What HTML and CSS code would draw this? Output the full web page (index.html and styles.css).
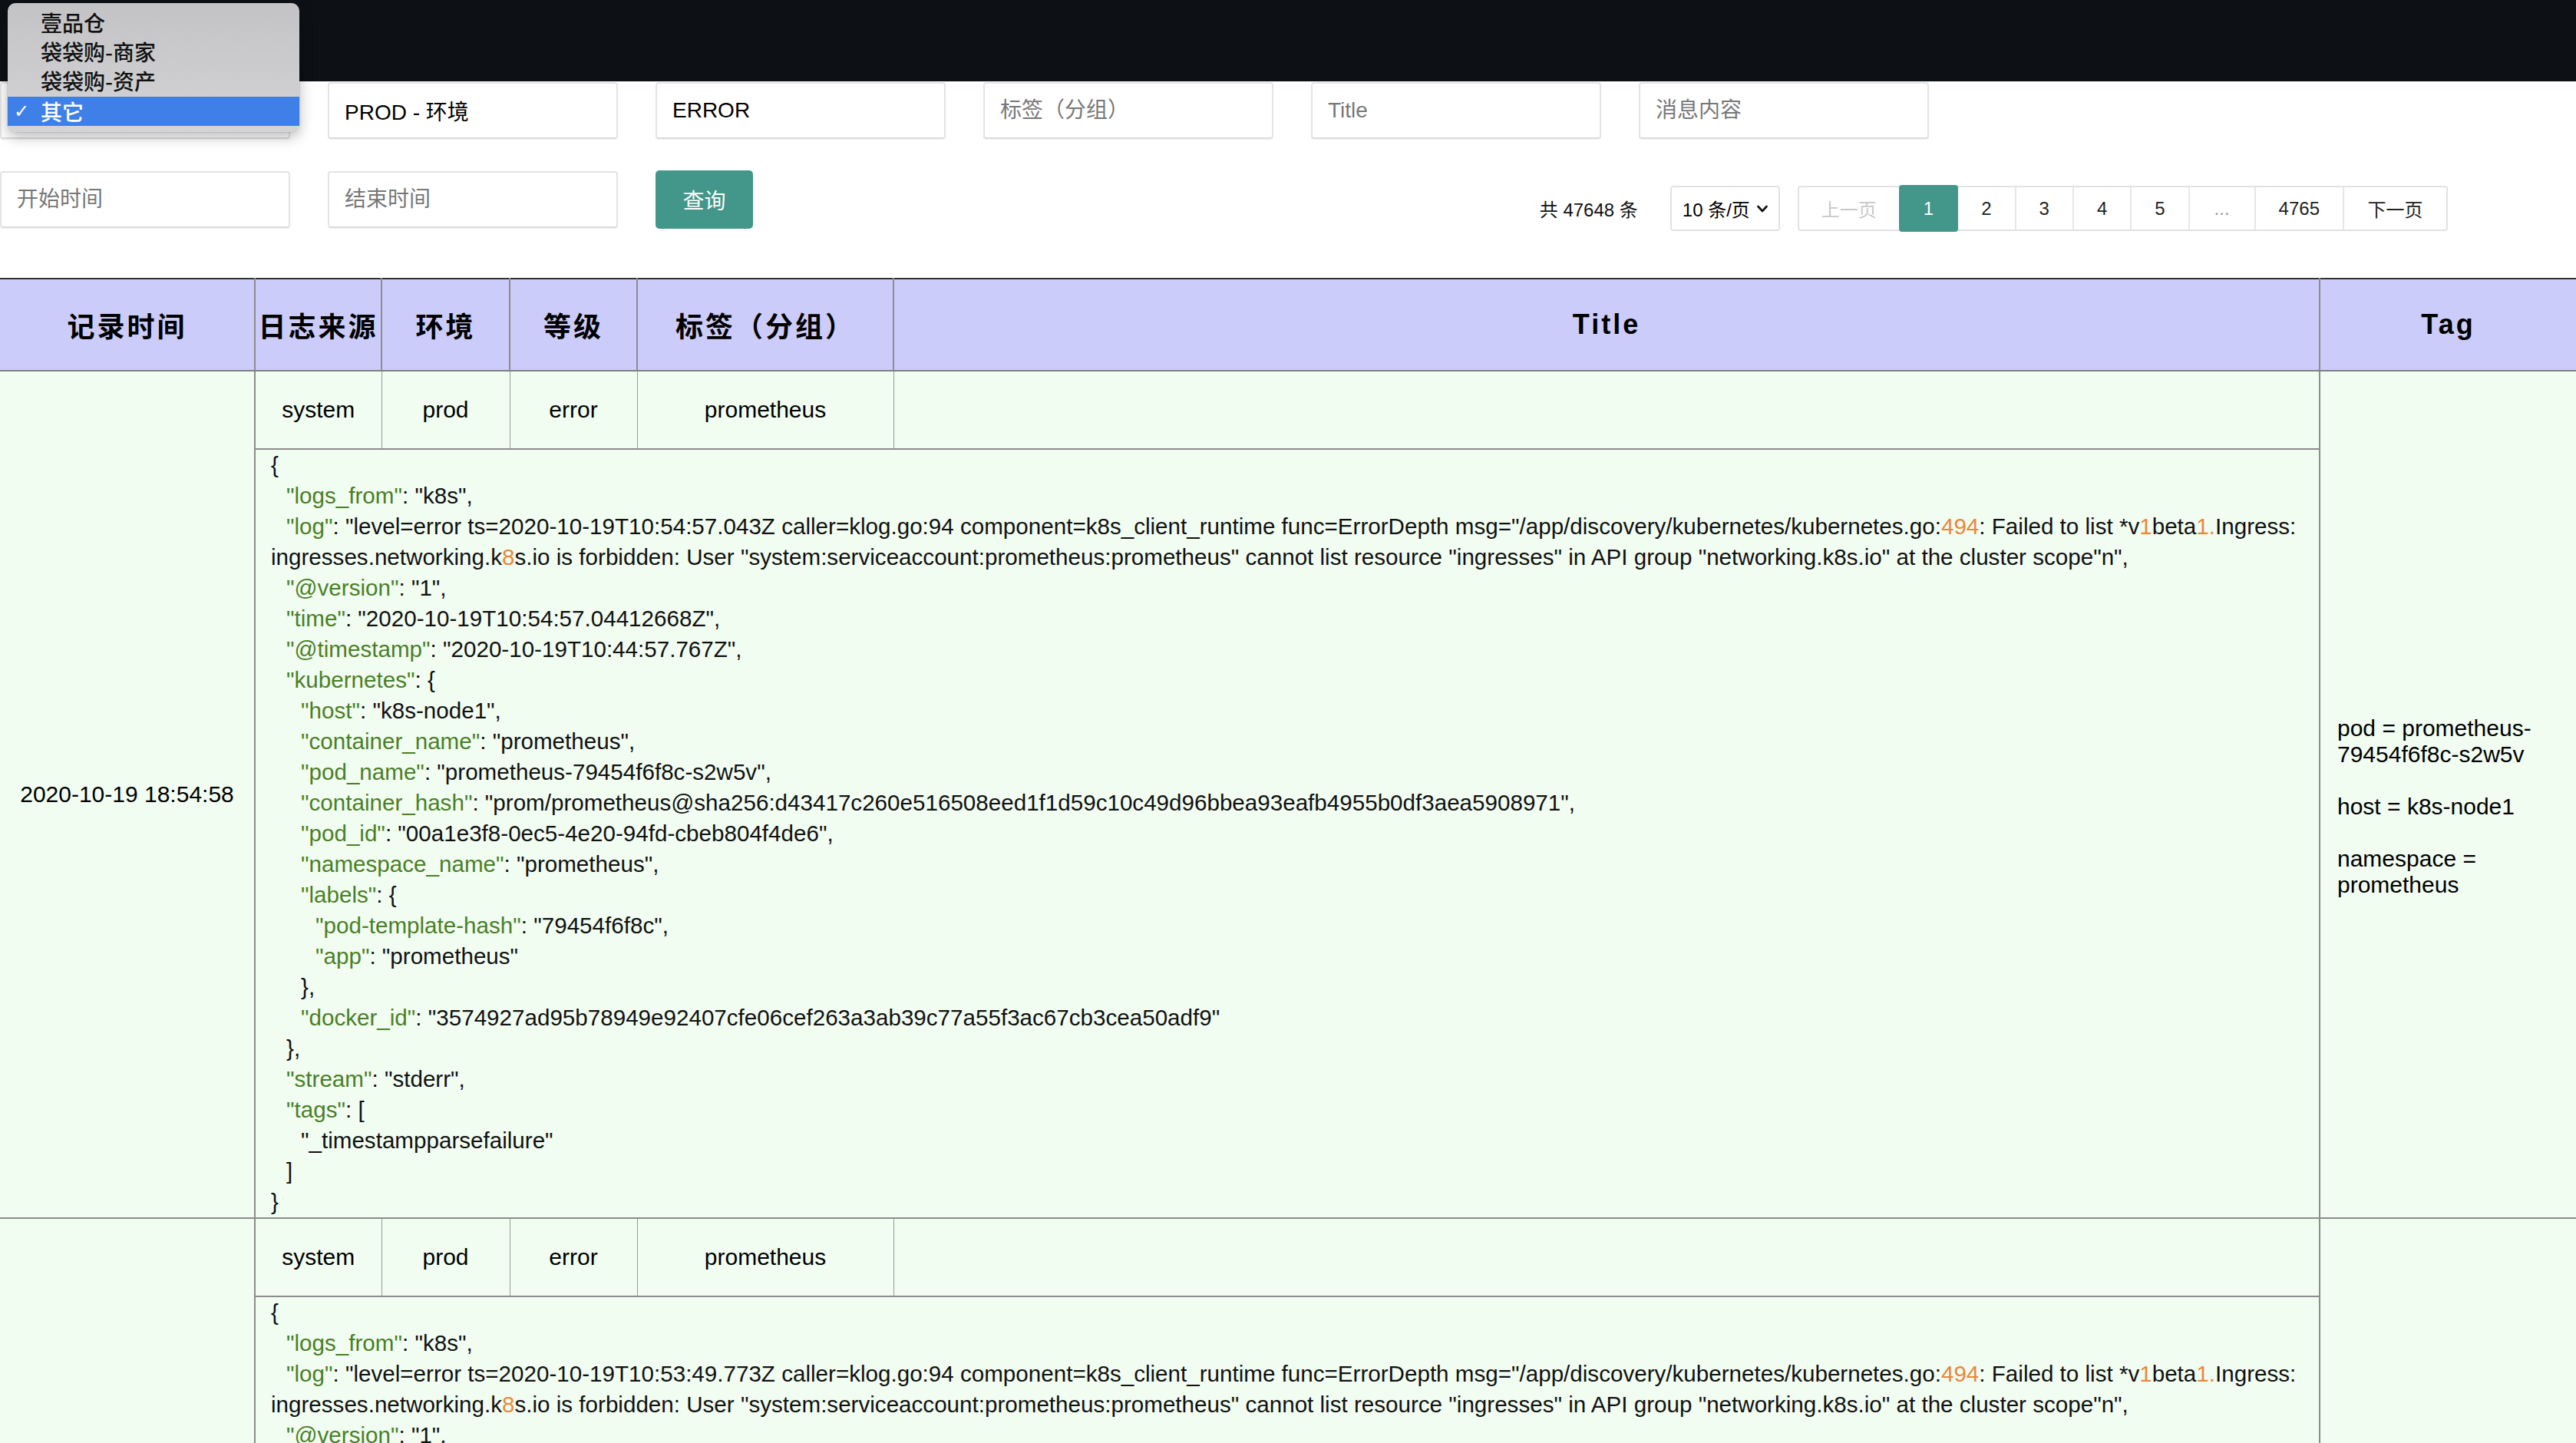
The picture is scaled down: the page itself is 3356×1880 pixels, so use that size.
FILE: index.html
```html
<!DOCTYPE html>
<html lang="zh-CN">
<head>
<meta charset="utf-8">
<title>日志查询</title>
<link rel="stylesheet" href="styles.css">
</head>
<body>
<div class="topbar"></div>

<div class="filters">
  <div class="filter-row">
    <div class="field select-field"></div>
    <input class="field" type="text" value="PROD - 环境">
    <input class="field" type="text" value="ERROR">
    <input class="field" type="text" placeholder="标签（分组）">
    <input class="field" type="text" placeholder="Title">
    <input class="field" type="text" placeholder="消息内容">
  </div>
  <div class="filter-row second">
    <input class="field" type="text" placeholder="开始时间">
    <input class="field" type="text" placeholder="结束时间">
    <button class="btn-query" type="button">查询</button>
    <div class="pager-wrap">
      <span class="total">共 47648 条</span>
      <div class="size-select">10 条/页
        <svg class="chev" viewBox="0 0 14 10" width="14" height="10"><path d="M1.5 2 L7 8 L12.5 2" fill="none" stroke="#111" stroke-width="2.6" stroke-linecap="round" stroke-linejoin="round"/></svg>
      </div>
      <ul class="pager">
        <li class="disabled">上一页</li>
        <li class="active">1</li>
        <li>2</li>
        <li>3</li>
        <li>4</li>
        <li>5</li>
        <li class="more">...</li>
        <li>4765</li>
        <li>下一页</li>
      </ul>
    </div>
  </div>
</div>

<div class="menu">
  <div class="menu-item">壹品仓</div>
  <div class="menu-item">袋袋购-商家</div>
  <div class="menu-item">袋袋购-资产</div>
  <div class="menu-item selected"><span class="check">✓</span>其它</div>
</div>

<table class="logs">
  <colgroup>
    <col class="c-time">
    <col class="c-src">
    <col class="c-env">
    <col class="c-lvl">
    <col class="c-tag">
    <col class="c-title">
    <col class="c-tags">
  </colgroup>
  <thead>
    <tr>
      <th>记录时间</th>
      <th>日志来源</th>
      <th>环境</th>
      <th>等级</th>
      <th>标签（分组）</th>
      <th>Title</th>
      <th>Tag</th>
    </tr>
  </thead>
  <tbody>
    <tr class="meta">
      <td class="time" rowspan="2">2020-10-19 18:54:58</td>
      <td class="sub">system</td>
      <td class="sub">prod</td>
      <td class="sub">error</td>
      <td class="sub">prometheus</td>
      <td class="sub"></td>
      <td class="tagcell" rowspan="2">pod = prometheus-<wbr>79454f6f8c-s2w5v<br><br>host = k8s-node1<br><br>namespace = prometheus</td>
    </tr>
    <tr>
      <td class="json" colspan="5">
        <div>{</div>
        <div class="i1"><span class="k">"logs_from"</span>: "k8s",</div>
        <div class="i1"><span class="k">"log"</span>: "level=error ts=2020-10-19T10:54:57.043Z caller=klog.go:94 component=k8s_client_runtime func=ErrorDepth msg="/app/discovery/kubernetes/kubernetes.go:<span class="n">494</span>: Failed to list *v<span class="n">1</span>beta<span class="n">1.</span>Ingress:</div>
        <div>ingresses.networking.k<span class="n">8</span>s.io is forbidden: User "system:serviceaccount:prometheus:prometheus" cannot list resource "ingresses" in API group "networking.k8s.io" at the cluster scope"n",</div>
        <div class="i1"><span class="k">"@version"</span>: "1",</div>
        <div class="i1"><span class="k">"time"</span>: "2020-10-19T10:54:57.04412668Z",</div>
        <div class="i1"><span class="k">"@timestamp"</span>: "2020-10-19T10:44:57.767Z",</div>
        <div class="i1"><span class="k">"kubernetes"</span>: {</div>
        <div class="i2"><span class="k">"host"</span>: "k8s-node1",</div>
        <div class="i2"><span class="k">"container_name"</span>: "prometheus",</div>
        <div class="i2"><span class="k">"pod_name"</span>: "prometheus-79454f6f8c-s2w5v",</div>
        <div class="i2"><span class="k">"container_hash"</span>: "prom/prometheus@sha256:d43417c260e516508eed1f1d59c10c49d96bbea93eafb4955b0df3aea5908971",</div>
        <div class="i2"><span class="k">"pod_id"</span>: "00a1e3f8-0ec5-4e20-94fd-cbeb804f4de6",</div>
        <div class="i2"><span class="k">"namespace_name"</span>: "prometheus",</div>
        <div class="i2"><span class="k">"labels"</span>: {</div>
        <div class="i3"><span class="k">"pod-template-hash"</span>: "79454f6f8c",</div>
        <div class="i3"><span class="k">"app"</span>: "prometheus"</div>
        <div class="i2">},</div>
        <div class="i2"><span class="k">"docker_id"</span>: "3574927ad95b78949e92407cfe06cef263a3ab39c77a55f3ac67cb3cea50adf9"</div>
        <div class="i1">},</div>
        <div class="i1"><span class="k">"stream"</span>: "stderr",</div>
        <div class="i1"><span class="k">"tags"</span>: [</div>
        <div class="i2">"_timestampparsefailure"</div>
        <div class="i1">]</div>
        <div>}</div>
      </td>
    </tr>
    <tr class="meta">
      <td class="time" rowspan="2">2020-10-19 18:53:50</td>
      <td class="sub">system</td>
      <td class="sub">prod</td>
      <td class="sub">error</td>
      <td class="sub">prometheus</td>
      <td class="sub"></td>
      <td class="tagcell" rowspan="2">pod = prometheus-<wbr>79454f6f8c-s2w5v<br><br>host = k8s-node1<br><br>namespace = prometheus</td>
    </tr>
    <tr>
      <td class="json" colspan="5">
        <div>{</div>
        <div class="i1"><span class="k">"logs_from"</span>: "k8s",</div>
        <div class="i1"><span class="k">"log"</span>: "level=error ts=2020-10-19T10:53:49.773Z caller=klog.go:94 component=k8s_client_runtime func=ErrorDepth msg="/app/discovery/kubernetes/kubernetes.go:<span class="n">494</span>: Failed to list *v<span class="n">1</span>beta<span class="n">1.</span>Ingress:</div>
        <div>ingresses.networking.k<span class="n">8</span>s.io is forbidden: User "system:serviceaccount:prometheus:prometheus" cannot list resource "ingresses" in API group "networking.k8s.io" at the cluster scope"n",</div>
        <div class="i1"><span class="k">"@version"</span>: "1",</div>
        <div class="i1"><span class="k">"time"</span>: "2020-10-19T10:53:49.77412668Z",</div>
        <div class="i1"><span class="k">"@timestamp"</span>: "2020-10-19T10:43:49.774Z",</div>
        <div class="i1"><span class="k">"kubernetes"</span>: {</div>
        <div class="i2"><span class="k">"host"</span>: "k8s-node1",</div>
        <div class="i2"><span class="k">"container_name"</span>: "prometheus",</div>
        <div class="i2"><span class="k">"pod_name"</span>: "prometheus-79454f6f8c-s2w5v",</div>
        <div class="i2"><span class="k">"container_hash"</span>: "prom/prometheus@sha256:d43417c260e516508eed1f1d59c10c49d96bbea93eafb4955b0df3aea5908971",</div>
        <div class="i2"><span class="k">"pod_id"</span>: "00a1e3f8-0ec5-4e20-94fd-cbeb804f4de6",</div>
        <div class="i2"><span class="k">"namespace_name"</span>: "prometheus",</div>
        <div class="i2"><span class="k">"labels"</span>: {</div>
        <div class="i3"><span class="k">"pod-template-hash"</span>: "79454f6f8c",</div>
        <div class="i3"><span class="k">"app"</span>: "prometheus"</div>
        <div class="i2">},</div>
        <div class="i2"><span class="k">"docker_id"</span>: "3574927ad95b78949e92407cfe06cef263a3ab39c77a55f3ac67cb3cea50adf9"</div>
        <div class="i1">},</div>
        <div class="i1"><span class="k">"stream"</span>: "stderr",</div>
        <div class="i1"><span class="k">"tags"</span>: [</div>
        <div class="i2">"_timestampparsefailure"</div>
        <div class="i1">]</div>
        <div>}</div>
      </td>
    </tr>
  </tbody>
</table>
</body>
</html>
```

FILE: styles.css
```css
html, body {
  margin: 0;
  padding: 0;
  overflow: hidden;
  background: #ffffff;
}

body {
  font-family: "Liberation Sans", "Noto Sans CJK SC", sans-serif;
  color: #000;
  position: relative;
}

.topbar {
  height: 106px;
  background: #0d1014;
}

/* ---------- filters ---------- */
.filters {
  padding-top: 1px;
}

.filter-row {
  display: flex;
  align-items: flex-start;
  gap: 49px;
}

.filter-row.second {
  margin-top: 42px;
}

.field {
  box-sizing: border-box;
  width: 378px;
  height: 74px;
  margin: 0;
  padding: 0 20px;
  border: 2px solid #e4e4e4;
  border-bottom-color: #dcdcdc;
  border-radius: 4px;
  background: #fff;
  font-family: "Liberation Sans", "Noto Sans CJK SC", sans-serif;
  font-size: 28px;
  color: #000;
  outline: none;
  box-shadow: 0 1px 1px rgba(0,0,0,0.06);
}

.field::placeholder {
  color: #777;
}

.btn-query {
  box-sizing: border-box;
  width: 127px;
  height: 76px;
  margin-top: -1px;
  border: none;
  border-radius: 5px;
  background: #42968a;
  color: #fff;
  font-family: "Liberation Sans", "Noto Sans CJK SC", sans-serif;
  font-size: 28px;
}

.pager-wrap {
  margin-left: auto;
  margin-right: 167px;
  margin-top: 19px;
  display: flex;
  align-items: center;
  font-size: 24px;
}

.total {
  margin-right: 42px;
  color: #111;
}

.size-select {
  box-sizing: border-box;
  width: 143px;
  height: 59px;
  display: flex;
  align-items: center;
  padding-left: 14px;
  border: 2px solid #e2e2e2;
  border-radius: 4px;
  color: #000;
  margin-right: 23px;
  white-space: nowrap;
}

.chev {
  margin-left: 9px;
}

.pager {
  display: flex;
  margin: 0;
  padding: 0;
  list-style: none;
  border: 2px solid #e2e2e2;
  border-radius: 4px;
  height: 59px;
  box-sizing: border-box;
}

.pager li {
  display: flex;
  align-items: center;
  justify-content: center;
  padding: 0 30px;
  border-left: 2px solid #e6e6e6;
  color: #222;
}

.pager li:first-child {
  border-left: none;
  width: 130px;
  padding: 0;
}

.pager li:last-child {
  width: 133px;
  padding: 0;
}

.pager li.disabled {
  color: #c8c8c8;
}

.pager li.active {
  background: #42968a;
  color: #fff;
  border-left: none;
  border-radius: 4px;
  margin: -3px 0;
  padding: 0 32px;
}

.pager li.active + li {
  border-left: none;
}

.pager li.more {
  color: #999;
  padding: 0 32px;
}

/* ---------- dropdown menu overlay ---------- */
.menu {
  position: absolute;
  left: 10px;
  top: 4px;
  width: 380px;
  height: 168px;
  box-sizing: border-box;
  padding-top: 6px;
  border-radius: 10px;
  background: linear-gradient(#c3c3c5, #d4d4d6);
  box-shadow: 0 6px 18px rgba(0,0,0,0.28), 0 0 0 1px rgba(0,0,0,0.08);
  font-family: "Noto Sans CJK SC", "Liberation Sans", sans-serif;
  font-size: 28px;
  font-weight: 500;
  color: #111;
}

.menu-item {
  position: relative;
  height: 38px;
  line-height: 38px;
  padding-left: 43px;
}

.menu-item.selected {
  margin-top: 2px;
  background: #3f80e8;
  color: #fff;
}

.check {
  position: absolute;
  left: 8px;
  top: 0;
  font-family: "DejaVu Sans", sans-serif;
  font-weight: bold;
  font-size: 24px;
}

/* ---------- table ---------- */
.logs {
  width: 100%;
  margin-top: 61px;
  border-collapse: collapse;
  table-layout: fixed;
}

.c-time { width: 332px; }
.c-src { width: 165px; }
.c-env { width: 167px; }
.c-lvl { width: 166px; }
.c-tag { width: 334px; }
.c-tags { width: 334px; }

.logs th {
  height: 118px;
  padding: 0;
  background: #ccccfa;
  border-top: 2px solid #333;
  border-bottom: 2px solid #808080;
  border-left: 2px solid #8c8c8c;
  border-right: 2px solid #8c8c8c;
  font-size: 36px;
  font-weight: bold;
  letter-spacing: 3px;
  text-align: center;
  vertical-align: middle;
}

.logs th:first-child { border-left: none; }
.logs th:last-child { border-right: none; }

.logs td {
  background: #f1fdf1;
  border: 2px solid #8c8c8c;
  padding: 0;
  vertical-align: middle;
}

.logs td.time {
  border-left: none;
  text-align: center;
  font-size: 30px;
}

.logs td.sub {
  height: 100px;
  text-align: center;
  font-size: 30px;
  border-left-width: 1px;
  border-right-width: 1px;
  border-left-color: #999;
  border-right-color: #999;
}

.logs td.tagcell {
  border-right: none;
  padding: 32px 18px 0 22px;
  font-size: 30px;
  line-height: 34px;
}

.logs td.json {
  padding: 0 8px 0 20px;
  font-size: 29.6px;
  line-height: 40px;
  color: #111;
  vertical-align: top;
}

.json div {
  white-space: nowrap;
  overflow: hidden;
}

.json .i1 { padding-left: 20px; }
.json .i2 { padding-left: 39px; }
.json .i3 { padding-left: 58px; }

.json .k { color: #4b7f26; }
.json .n { color: #e8883e; }
```
